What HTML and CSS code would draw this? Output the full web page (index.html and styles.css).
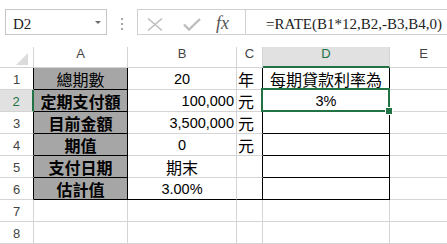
FILE: index.html
```html
<!DOCTYPE html>
<html>
<head>
<meta charset="utf-8">
<link rel="stylesheet" href="styles.css">
</head>
<body>
<div class="app">
  <div class="toolbar">
    <div class="namebox"><span class="ref">D2</span><span class="caret"></span></div>
    <div class="grip"><i></i><i></i><i></i></div>
    <div class="fbtns">
      <svg class="ic-x" width="16" height="13" viewBox="0 0 16 13"><path d="M1 0.5 L15 12.5 M15 0.5 L1 12.5" stroke="#bdbdbd" stroke-width="1.5" fill="none"/></svg>
      <svg class="ic-check" width="18" height="13" viewBox="0 0 18 13"><path d="M1 6.5 L6 11.5 L17 1" stroke="#bdbdbd" stroke-width="2.4" fill="none"/></svg>
      <span class="fx">fx</span>
    </div>
    <div class="formula">=RATE(B1*12,B2,-B3,B4,0)</div>
  </div>
  <div class="sheet">
    <div class="c h corner"><span class="tri"></span></div>
    <div class="c h">A</div>
    <div class="c h">B</div>
    <div class="c h">C</div>
    <div class="c h hsel">D</div>
    <div class="c h">E</div>

    <div class="c rh rb">1</div>
    <div class="c a cjk">總期數</div>
    <div class="c ctr">20</div>
    <div class="c cjk lft rbk">年</div>
    <div class="c d cjk ctr">每期貸款利率為</div>
    <div class="c"></div>

    <div class="c rh rsel">2</div>
    <div class="c a cjk bold">定期支付額</div>
    <div class="c rgt">100,000</div>
    <div class="c cjk lft rbk">元</div>
    <div class="c d ctr sel-cell">3%<span class="sel"><span class="handle"></span></span></div>
    <div class="c"></div>

    <div class="c rh rb">3</div>
    <div class="c a cjk bold">目前金額</div>
    <div class="c rgt">3,500,000</div>
    <div class="c cjk lft rbk">元</div>
    <div class="c d"></div>
    <div class="c"></div>

    <div class="c rh rb">4</div>
    <div class="c a cjk bold">期值</div>
    <div class="c ctr">0</div>
    <div class="c cjk lft rbk">元</div>
    <div class="c d"></div>
    <div class="c"></div>

    <div class="c rh rb">5</div>
    <div class="c a cjk bold">支付日期</div>
    <div class="c cjk ctr">期末</div>
    <div class="c rbk"></div>
    <div class="c d"></div>
    <div class="c"></div>

    <div class="c rh rb">6</div>
    <div class="c a cjk bold">估計值</div>
    <div class="c ctr bbk">3.00%</div>
    <div class="c rbk bbk"></div>
    <div class="c d"></div>
    <div class="c"></div>

    <div class="c rh">7</div>
    <div class="c"></div>
    <div class="c"></div>
    <div class="c"></div>
    <div class="c"></div>
    <div class="c"></div>

    <div class="c rh">8</div>
    <div class="c"></div>
    <div class="c"></div>
    <div class="c"></div>
    <div class="c"></div>
    <div class="c"></div>
  </div>
</div>
</body>
</html>
```
FILE: styles.css
```css
* { box-sizing: border-box; }
html, body { margin: 0; padding: 0; background: #fff; }
.app {
  width: 447px;
  height: 244px;
  overflow: hidden;
  font-family: "Liberation Sans", Arial, sans-serif;
}
.toolbar {
  display: flex;
  align-items: flex-start;
  height: 47px;
  padding: 9px 0 0 5px;
  width: 600px;
}
.namebox {
  flex: none;
  width: 102px;
  height: 26px;
  border: 1px solid #c6c6c6;
  display: flex;
  justify-content: space-between;
  align-items: flex-start;
  padding: 5px 5px 0 7px;
  font-family: "Liberation Serif", serif;
  font-size: 15px;
  line-height: 19px;
  color: #222;
}
.caret {
  width: 0;
  height: 0;
  border-left: 3px solid transparent;
  border-right: 3px solid transparent;
  border-top: 3px solid #6b6b6b;
  margin-top: 6px;
}
.grip {
  flex: none;
  width: 30px;
  display: flex;
  flex-direction: column;
  align-items: center;
  gap: 3px;
  padding-top: 9px;
}
.grip i {
  display: block;
  width: 2px;
  height: 2px;
  background: #a8a8a8;
}
.fbtns {
  flex: none;
  width: 108px;
  height: 26px;
  border: 1px solid #d0d0d0;
  border-right: none;
  display: flex;
  align-items: flex-start;
  padding-left: 9px;
}
.ic-x { margin-top: 8px; flex: none; }
.ic-check { margin-top: 8px; margin-left: 20px; flex: none; }
.fx {
  margin-left: 15px;
  margin-top: 3px;
  font-family: "Liberation Serif", serif;
  font-style: italic;
  font-size: 18px;
  line-height: 20px;
  color: #555;
}
.formula {
  flex: none;
  width: 260px;
  height: 26px;
  border: 1px solid #d0d0d0;
  padding: 5px 0 0 20px;
  font-family: "Liberation Serif", serif;
  font-size: 15px;
  line-height: 19px;
  color: #222;
  white-space: nowrap;
}

.sheet {
  display: grid;
  grid-template-columns: 34px 94px 109px 26px 127px 68px;
  grid-template-rows: 21px repeat(8, 22px);
  width: 458px;
}
.c {
  border-right: 1px solid #d4d4d4;
  border-bottom: 1px solid #d4d4d4;
  font-size: 14.5px;
  line-height: 20px;
  padding-top: 1px;
  color: #000;
  white-space: nowrap;
  overflow: hidden;
}
.h {
  color: #444;
  font-size: 13px;
  line-height: 14px;
  padding-top: 0;
  text-align: center;
}
.corner { position: relative; }
.tri {
  position: absolute;
  right: 5px;
  bottom: 2px;
  width: 0;
  height: 0;
  border-left: 12px solid transparent;
  border-bottom: 12px solid #dcdcdc;
}
.hsel {
  background: #e1e1e1;
  color: #217346;
  border-bottom: 2px solid #217346;
}
.rh {
  text-align: center;
  font-size: 13px;
  color: #444;
  padding-top: 2px;
}
.rb { border-right-color: #000; }
.rsel {
  background: #e1e1e1;
  color: #217346;
  border-right: 2px solid #217346;
}
.cjk {
  font-family: "Noto Sans CJK TC", "Noto Sans CJK SC", sans-serif;
  font-size: 16px;
}
.bold { font-weight: 700; }
.a {
  background: #a6a6a6;
  border-right-color: #000;
  border-bottom-color: #000;
  text-align: center;
}
.ctr { text-align: center; }
.rgt { text-align: right; padding-right: 2px; }
.lft { text-align: left; padding-left: 1px; }
.rbk { border-right-color: #000; }
.bbk { border-bottom-color: #000; }
.d {
  border-right-color: #000;
  border-bottom-color: #000;
}
.sel-cell { position: relative; overflow: visible; }
.sel {
  position: absolute;
  top: -2px;
  left: -2px;
  right: -1px;
  bottom: -1px;
  border: 2px solid #217346;
}
.handle {
  position: absolute;
  right: -5px;
  bottom: -5px;
  width: 8px;
  height: 8px;
  background: #217346;
  border: 1px solid #fff;
}
```
